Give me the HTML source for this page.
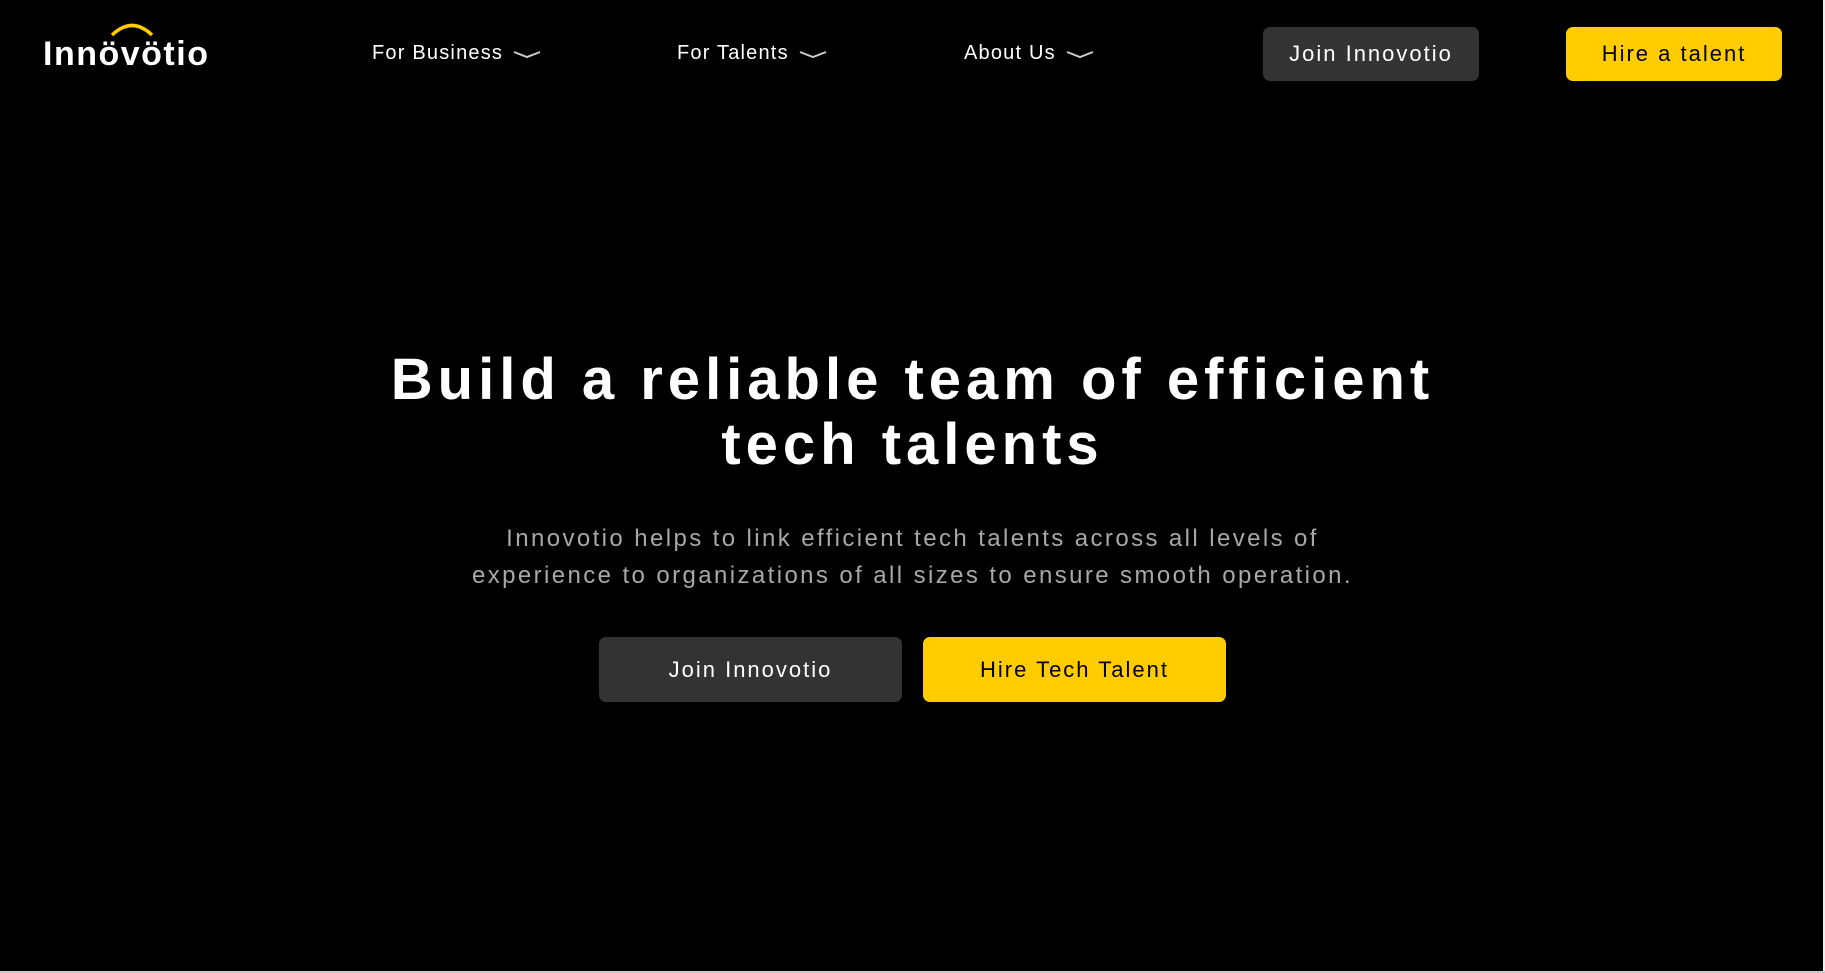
<!DOCTYPE html>
<html><head><meta charset="utf-8"><style>
*{margin:0;padding:0;box-sizing:border-box}
body{width:1825px;height:973px;background:#000;overflow:hidden;font-family:"Liberation Sans",sans-serif;color:#fff;position:relative}
.abs{position:absolute}
.nav{font-size:20px;color:#fff;top:42px;letter-spacing:1.2px}
.nav svg{vertical-align:middle;margin-left:10px}
.btn{position:absolute;border-radius:7px;display:flex;align-items:center;justify-content:center;font-size:22px;letter-spacing:2px}
h1{position:absolute;left:0;width:1825px;top:347px;text-align:center;font-size:58px;line-height:65px;font-weight:bold;letter-spacing:5px}
p.sub{position:absolute;left:0;width:1825px;top:520px;text-align:center;font-size:24px;line-height:37px;color:#a8a8a8;letter-spacing:2.4px}
</style></head><body>
<div class="abs" style="left:43px;top:35px;font-size:34px;font-weight:bold;letter-spacing:1.5px">Innövötio</div>
<svg class="abs" style="left:108px;top:22px" width="50" height="16"><path d="M4 13 Q24 -6 44 13" stroke="#ffcc00" stroke-width="3.5" fill="none"/></svg>
<div class="abs nav" style="left:372px">For Business<svg width="28" height="12"><path d="M1 4 L14 9 L27 4" stroke="#ccc" stroke-width="2" fill="none"/></svg></div>
<div class="abs nav" style="left:677px">For Talents<svg width="28" height="12"><path d="M1 4 L14 9 L27 4" stroke="#ccc" stroke-width="2" fill="none"/></svg></div>
<div class="abs nav" style="left:964px">About Us<svg width="28" height="12"><path d="M1 4 L14 9 L27 4" stroke="#ccc" stroke-width="2" fill="none"/></svg></div>
<div class="btn" style="left:1263px;top:27px;width:216px;height:54px;background:#333;color:#fff">Join Innovotio</div>
<div class="btn" style="left:1566px;top:27px;width:216px;height:54px;background:#ffcc00;color:#000">Hire a talent</div>
<h1>Build a reliable team of efficient<br>tech talents</h1>
<p class="sub">Innovotio helps to link efficient tech talents across all levels of<br>experience to organizations of all sizes to ensure smooth operation.</p>
<div class="btn" style="left:599px;top:637px;width:303px;height:65px;background:#333;color:#fff">Join Innovotio</div>
<div class="btn" style="left:923px;top:637px;width:303px;height:65px;background:#ffcc00;color:#000">Hire Tech Talent</div>
<div class="abs" style="right:0;top:0;width:2px;height:973px;background:#eee"></div>
<div class="abs" style="left:0;bottom:0;width:1825px;height:2px;background:#ccc"></div>
</body></html>
